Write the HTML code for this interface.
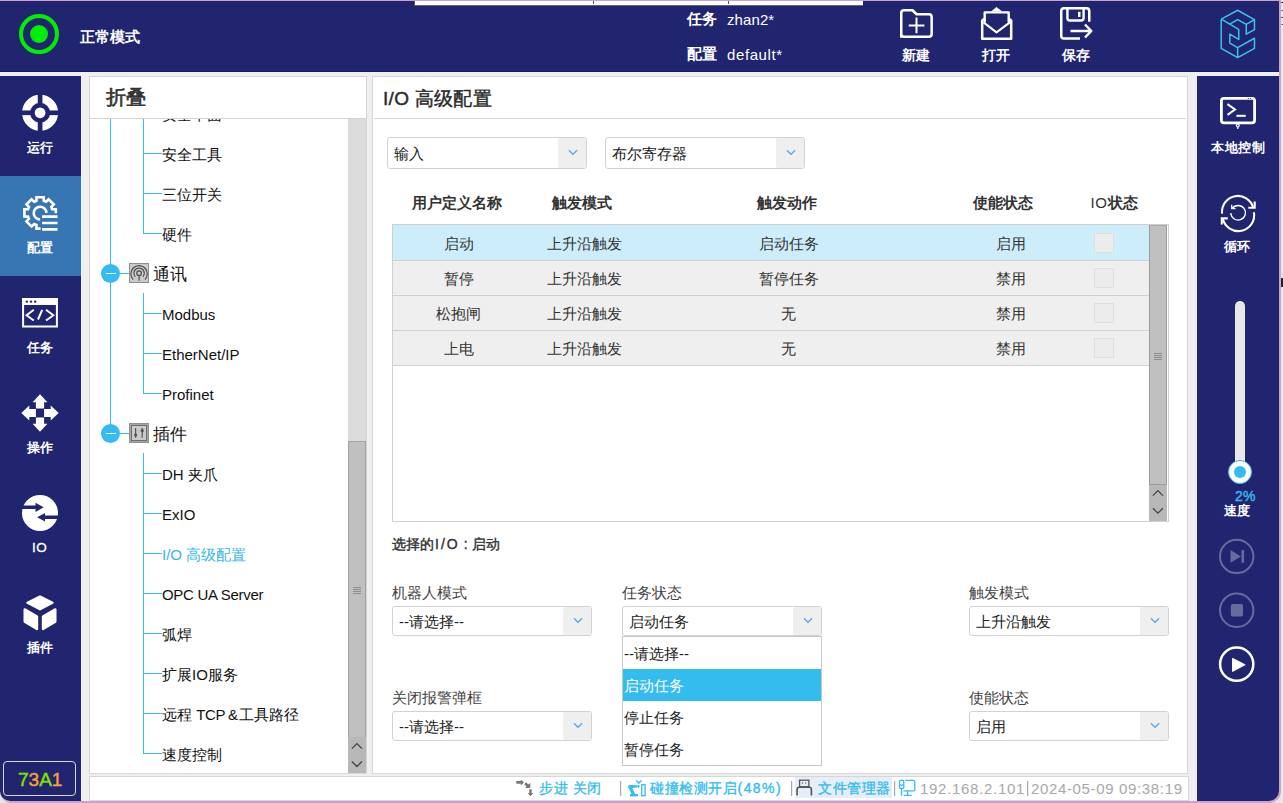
<!DOCTYPE html>
<html><head><meta charset="utf-8">
<style>
*{margin:0;padding:0;box-sizing:border-box}
html,body{width:1283px;height:803px;overflow:hidden;background:#e6e6e6}
body{position:relative;font-family:"Liberation Sans",sans-serif;color:#222}
.a{position:absolute}
.nav{background:#21256f}
.wt{color:#fff;font-weight:bold;white-space:nowrap}
.t{white-space:nowrap;position:absolute;line-height:1}
.panel{position:absolute;background:#fff;border:1px solid #d6d6d6}
.combo{position:absolute;background:#fff;border:1px solid #d2d2d2;border-radius:3px;overflow:hidden}
.combo .btn{position:absolute;top:0;right:0;bottom:0;width:28px;background:#efefef;border-radius:2px}
.combo .btn svg{position:absolute;left:9.5px;top:50%;margin-top:-4.3px}
.combo .tx{position:absolute;left:6px;top:2px;bottom:0;display:flex;align-items:center;font-size:15px;color:#222;white-space:nowrap}
.lbl{position:absolute;font-size:15px;color:#444;white-space:nowrap;line-height:1}
.tree-t{position:absolute;font-size:15px;color:#111;white-space:nowrap;line-height:20px}
.hl{position:absolute;background:#35bcee;height:1px}
.vl{position:absolute;background:#35bcee;width:1px}
</style></head>
<body>
<!-- window frame -->
<div class="a" style="left:0;top:0;width:1281px;height:803px;background:#c9a3c9;border-radius:0 0 12px 12px"></div>
<div class="a" style="left:0;top:1px;width:1279px;height:800px;background:#efefef;border-radius:0 0 10px 10px;overflow:hidden">
</div>

<!-- header -->
<div class="a nav" style="left:0;top:1px;width:1279px;height:71px"></div>
<div class="a" style="left:0;top:71px;width:1279px;height:1px;background:#161a60"></div>
<div class="a" style="left:414px;top:1px;width:449px;height:5px;background:#fff;border-left:1px solid #555;border-bottom:1px solid #666"></div>

<div class="a" style="left:593px;top:1px;width:1px;height:3px;background:#555"></div>
<div class="a" style="left:728px;top:1px;width:1px;height:3px;background:#555"></div>
<div class="a" style="left:1281px;top:0;width:2px;height:803px;background:#e8e8e8"></div>
<div class="a" style="left:1281px;top:2px;width:2px;height:1px;background:#333"></div>
<div class="a" style="left:1281px;top:10px;width:2px;height:1px;background:#777"></div>
<div class="a" style="left:1281px;top:17px;width:2px;height:1px;background:#555"></div>
<div class="a" style="left:1281px;top:24px;width:2px;height:1px;background:#777"></div>
<div class="a" style="left:1281px;top:278px;width:2px;height:9px;background:#222"></div>
<!-- status ring -->
<div class="a" style="left:19px;top:14px;width:40px;height:40px;border:4px solid #00ee00;border-radius:50%"></div>
<div class="a" style="left:30px;top:25px;width:18px;height:18px;background:#00ee00;border-radius:50%"></div>
<div class="t wt" style="left:80px;top:30px;font-size:14.5px">正常模式</div>

<div class="t wt" style="left:687px;top:11px;font-size:15px">任务</div>
<div class="t" style="left:727px;top:12px;font-size:15px;color:#fff;letter-spacing:0.1px">zhan2*</div>
<div class="t wt" style="left:687px;top:46px;font-size:15px">配置</div>
<div class="t" style="left:727px;top:47px;font-size:15px;color:#fff;letter-spacing:0.6px">default*</div>

<div class="t wt" style="left:902px;top:49px;font-size:13.5px">新建</div>
<div class="t wt" style="left:982px;top:49px;font-size:13.5px">打开</div>
<div class="t wt" style="left:1062px;top:49px;font-size:13.5px">保存</div>

<!-- left sidebar -->
<div class="a nav" style="left:0;top:76px;width:81px;height:725px;border-radius:0 0 0 10px"></div>
<div class="a" style="left:0;top:176px;width:81px;height:100px;background:#3776b3"></div>
<div class="t wt" style="left:27px;top:141px;font-size:13px">运行</div>
<div class="t wt" style="left:27px;top:241px;font-size:13px">配置</div>
<div class="t wt" style="left:27px;top:341px;font-size:13px">任务</div>
<div class="t wt" style="left:27px;top:441px;font-size:13px">操作</div>
<div class="t" style="left:32px;top:541px;font-size:13.5px;color:#fff;letter-spacing:0.5px;-webkit-text-stroke:0.3px #fff">IO</div>
<div class="t wt" style="left:27px;top:641px;font-size:13px">插件</div>
<div class="a" style="left:3px;top:761px;width:73px;height:35px;border:1.5px solid #d8d8d8;border-radius:4px"></div>
<div class="t" style="left:18px;top:770px;font-size:19px;-webkit-text-stroke:0.45px currentColor"><span style="color:#86e000;-webkit-text-stroke:0.45px #86e000">7</span><span style="color:#fa9e3c;-webkit-text-stroke:0.45px #fa9e3c">3</span><span style="color:#86e000;-webkit-text-stroke:0.45px #86e000">A</span><span style="color:#fa9e3c;-webkit-text-stroke:0.45px #fa9e3c">1</span></div>

<!-- right sidebar -->
<div class="a nav" style="left:1197px;top:76px;width:82px;height:725px;border-radius:0 0 10px 0"></div>
<div class="t wt" style="left:1211px;top:141px;font-size:13px;letter-spacing:0.6px">本地控制</div>
<div class="t wt" style="left:1224px;top:240px;font-size:13px">循环</div>
<div class="a" style="left:1235px;top:301px;width:10px;height:170px;background:#e8e8e8;border-radius:5px 5px 0 0"></div>
<div class="a" style="left:1228px;top:460px;width:24px;height:24px;background:#fff;border:1.5px solid #35bcee;border-radius:50%"></div>
<div class="a" style="left:1234px;top:466px;width:12px;height:12px;background:#35bcee;border-radius:50%"></div>
<div class="t" style="left:1235px;top:489px;font-size:14px;color:#35bcee;font-weight:normal;-webkit-text-stroke:0.4px #35bcee;letter-spacing:0.3px">2%</div>
<div class="t wt" style="left:1224px;top:504px;font-size:13px">速度</div>

<!-- tree panel -->
<div class="panel" style="left:89px;top:76px;width:278px;height:698px"></div>
<div class="t" style="left:106px;top:87px;font-size:20px;font-weight:normal;color:#333;-webkit-text-stroke:0.65px #333">折叠</div>
<div class="a" style="left:90px;top:118px;width:276px;height:1px;background:#d4d4d4"></div>

<div class="a" style="left:90px;top:119px;width:258px;height:654px;overflow:hidden;background:#fff">
<div class="vl" style="left:20px;top:0;height:314px;width:1.2px"></div>
<div class="vl" style="left:53.0px;top:-19.0px;height:134.0px"></div>
<div class="vl" style="left:53.0px;top:174.0px;height:101.0px"></div>
<div class="vl" style="left:53.0px;top:334.0px;height:301.0px"></div>
<div class="hl" style="left:53.0px;top:-6.0px;width:19.0px"></div>
<div class="tree-t" style="left:72px;top:-14px;color:#111">安全平面</div>
<div class="hl" style="left:53.0px;top:34.0px;width:19.0px"></div>
<div class="tree-t" style="left:72px;top:26px;color:#111">安全工具</div>
<div class="hl" style="left:53.0px;top:74.0px;width:19.0px"></div>
<div class="tree-t" style="left:72px;top:66px;color:#111">三位开关</div>
<div class="hl" style="left:53.0px;top:114.0px;width:19.0px"></div>
<div class="tree-t" style="left:72px;top:106px;color:#111">硬件</div>
<div class="hl" style="left:53.0px;top:194.0px;width:19.0px"></div>
<div class="tree-t" style="left:72px;top:186px;color:#111">Modbus</div>
<div class="hl" style="left:53.0px;top:234.0px;width:19.0px"></div>
<div class="tree-t" style="left:72px;top:226px;color:#111">EtherNet/IP</div>
<div class="hl" style="left:53.0px;top:274.0px;width:19.0px"></div>
<div class="tree-t" style="left:72px;top:266px;color:#111">Profinet</div>
<div class="hl" style="left:53.0px;top:354.0px;width:19.0px"></div>
<div class="tree-t" style="left:72px;top:346px;color:#111">DH 夹爪</div>
<div class="hl" style="left:53.0px;top:394.0px;width:19.0px"></div>
<div class="tree-t" style="left:72px;top:386px;color:#111">ExIO</div>
<div class="hl" style="left:53.0px;top:434.0px;width:19.0px"></div>
<div class="tree-t" style="left:72px;top:426px;color:#35b5ea">I/O 高级配置</div>
<div class="hl" style="left:53.0px;top:474.0px;width:19.0px"></div>
<div class="tree-t" style="left:72px;top:466px;color:#111"><span style="letter-spacing:-0.3px">OPC UA Server</span></div>
<div class="hl" style="left:53.0px;top:514.0px;width:19.0px"></div>
<div class="tree-t" style="left:72px;top:506px;color:#111">弧焊</div>
<div class="hl" style="left:53.0px;top:554.0px;width:19.0px"></div>
<div class="tree-t" style="left:72px;top:546px;color:#111">扩展IO服务</div>
<div class="hl" style="left:53.0px;top:594.0px;width:19.0px"></div>
<div class="tree-t" style="left:72px;top:586px;color:#111">远程 <span style="letter-spacing:-0.3px">TCP</span><span style="letter-spacing:-1.5px"> &amp; </span>工具路径</div>
<div class="hl" style="left:53.0px;top:634.0px;width:19.0px"></div>
<div class="tree-t" style="left:72px;top:626px;color:#111">速度控制</div>
<div class="a" style="left:11.1px;top:144.8px;width:19px;height:19px;border-radius:50%;background:#35bcee"></div>
<div class="a" style="left:15.6px;top:153.8px;width:10px;height:1.3px;background:#fff"></div>
<div class="hl" style="left:29.0px;top:154px;width:10px;height:1px"></div>
<div class="tree-t" style="left:63px;top:145px;font-size:16.5px">通讯</div>
<div class="a" style="left:11.1px;top:304.5px;width:19px;height:19px;border-radius:50%;background:#35bcee"></div>
<div class="a" style="left:15.6px;top:313.5px;width:10px;height:1.3px;background:#fff"></div>
<div class="hl" style="left:29.0px;top:314px;width:10px;height:1px"></div>
<div class="tree-t" style="left:63px;top:305px;font-size:16.5px">插件</div>
</div>
<svg class="a" style="left:0;top:0" width="1283" height="803" viewBox="0 0 1283 803">
 <rect x="129.5" y="263.5" width="19" height="19" fill="#cbcbcb" stroke="#8e8e8e" stroke-width="1"/>
 <g fill="none" stroke="#4a4a4a" stroke-width="1.15">
  <circle cx="139.1" cy="273.2" r="2.3"/>
  <path d="M139.1,275.6 V280.8"/>
  <path d="M135.3,276.8 A5.2,5.2 0 1 1 142.9,276.8"/>
  <path d="M133.2,279.5 A8.2,8.2 0 1 1 145,279.5"/>
 </g>
 <rect x="129.5" y="423.5" width="19" height="19" fill="#a6a6a6" stroke="#909090" stroke-width="1"/>
 <rect x="131.5" y="425.5" width="15" height="15" fill="#cacaca" stroke="#6e6e6e" stroke-width="1"/>
 <g fill="#555" stroke="#555">
  <path d="M135.6,428 V437.7 M142.2,428 V437.7" stroke-width="1.2"/>
  <circle cx="135.6" cy="435" r="1.6" stroke="none"/>
  <circle cx="142.2" cy="430.7" r="1.6" stroke="none"/>
 </g>
</svg>
<div class="a" style="left:348px;top:119px;width:18px;height:654px;background:#dcdcdc"></div>
<div class="a" style="left:348px;top:441px;width:18px;height:296px;background:#c0c0c0;border:1px solid #a2a2a2;border-bottom:none"></div>
<div class="a" style="left:353px;top:587px;width:8px;height:7px;background:repeating-linear-gradient(#8c8c8c 0 1px,transparent 1px 2px)"></div>
<div class="a" style="left:348px;top:737px;width:18px;height:36px;background:#b8b8b8"></div>
<svg class="a" style="left:348px;top:737px" width="18" height="36"><path d="M3.9,11.6 L8.9,6.6 L13.9,11.6 M3.9,24.5 L8.9,29.5 L13.9,24.5" fill="none" stroke="#444" stroke-width="1.3"/></svg>

<!-- main panel -->
<div class="panel" style="left:372px;top:76px;width:816px;height:698px"></div>
<div class="t" style="left:383px;top:89px;font-size:19px;font-weight:normal;color:#2a2a2a;-webkit-text-stroke:0.45px #2a2a2a;letter-spacing:0.3px">I/O 高级配置</div>
<div class="a" style="left:374px;top:118px;width:812px;height:1px;background:#d4d4d4"></div>

<div class="combo" style="left:387px;top:137px;width:200px;height:32px"><div class="tx">输入</div><div class="btn"><svg width="10" height="7" viewBox="0 0 10 7"><path d="M0.9,1.2 L5,5.2 L9.1,1.2" fill="none" stroke="#5ea6ea" stroke-width="1.35"/></svg></div></div>
<div class="combo" style="left:605px;top:137px;width:200px;height:32px"><div class="tx">布尔寄存器</div><div class="btn"><svg width="10" height="7" viewBox="0 0 10 7"><path d="M0.9,1.2 L5,5.2 L9.1,1.2" fill="none" stroke="#5ea6ea" stroke-width="1.35"/></svg></div></div>
<div class="t" style="left:357px;top:195px;width:200px;text-align:center;font-size:15px;font-weight:bold;color:#333">用户定义名称</div>
<div class="t" style="left:482px;top:195px;width:200px;text-align:center;font-size:15px;font-weight:bold;color:#333">触发模式</div>
<div class="t" style="left:687px;top:195px;width:200px;text-align:center;font-size:15px;font-weight:bold;color:#333">触发动作</div>
<div class="t" style="left:903px;top:195px;width:200px;text-align:center;font-size:15px;font-weight:bold;color:#333">使能状态</div>
<div class="t" style="left:1014px;top:195px;width:200px;text-align:center;font-size:15px;font-weight:bold;color:#333"><span style="font-weight:normal;letter-spacing:0.6px">IO</span>状态</div>
<div class="a" style="left:392px;top:224px;width:777px;height:298px;border:1px solid #cfcfcf;background:#fff"></div>
<div class="a" style="left:393px;top:225px;width:756px;height:35px;background:#cdedfb"></div><div class="a" style="left:393px;top:260px;width:756px;height:1px;background:#d0d0d0;z-index:1"></div>
<div class="t" style="left:358.8px;top:236px;width:200px;text-align:center;font-size:15px;color:#333">启动</div>
<div class="t" style="left:484.8px;top:236px;width:200px;text-align:center;font-size:15px;color:#333">上升沿触发</div>
<div class="t" style="left:688.6px;top:236px;width:200px;text-align:center;font-size:15px;color:#333">启动任务</div>
<div class="t" style="left:910.6px;top:236px;width:200px;text-align:center;font-size:15px;color:#333">启用</div>
<div class="a" style="left:1094px;top:233px;width:20px;height:20px;background:#ececec;border:1px solid #dedede"></div>
<div class="a" style="left:393px;top:260px;width:756px;height:35px;background:#efefef"></div><div class="a" style="left:393px;top:295px;width:756px;height:1px;background:#d0d0d0;z-index:1"></div>
<div class="t" style="left:358.8px;top:271px;width:200px;text-align:center;font-size:15px;color:#333">暂停</div>
<div class="t" style="left:484.8px;top:271px;width:200px;text-align:center;font-size:15px;color:#333">上升沿触发</div>
<div class="t" style="left:688.6px;top:271px;width:200px;text-align:center;font-size:15px;color:#333">暂停任务</div>
<div class="t" style="left:910.6px;top:271px;width:200px;text-align:center;font-size:15px;color:#333">禁用</div>
<div class="a" style="left:1094px;top:268px;width:20px;height:20px;background:#ececec;border:1px solid #dedede"></div>
<div class="a" style="left:393px;top:295px;width:756px;height:35px;background:#efefef"></div><div class="a" style="left:393px;top:330px;width:756px;height:1px;background:#d0d0d0;z-index:1"></div>
<div class="t" style="left:358.8px;top:306px;width:200px;text-align:center;font-size:15px;color:#333">松抱闸</div>
<div class="t" style="left:484.8px;top:306px;width:200px;text-align:center;font-size:15px;color:#333">上升沿触发</div>
<div class="t" style="left:688.6px;top:306px;width:200px;text-align:center;font-size:15px;color:#333">无</div>
<div class="t" style="left:910.6px;top:306px;width:200px;text-align:center;font-size:15px;color:#333">禁用</div>
<div class="a" style="left:1094px;top:303px;width:20px;height:20px;background:#ececec;border:1px solid #dedede"></div>
<div class="a" style="left:393px;top:330px;width:756px;height:35px;background:#efefef"></div><div class="a" style="left:393px;top:365px;width:756px;height:1px;background:#d0d0d0;z-index:1"></div>
<div class="t" style="left:358.8px;top:341px;width:200px;text-align:center;font-size:15px;color:#333">上电</div>
<div class="t" style="left:484.8px;top:341px;width:200px;text-align:center;font-size:15px;color:#333">上升沿触发</div>
<div class="t" style="left:688.6px;top:341px;width:200px;text-align:center;font-size:15px;color:#333">无</div>
<div class="t" style="left:910.6px;top:341px;width:200px;text-align:center;font-size:15px;color:#333">禁用</div>
<div class="a" style="left:1094px;top:338px;width:20px;height:20px;background:#ececec;border:1px solid #dedede"></div>
<div class="a" style="left:1149px;top:225px;width:18px;height:260px;background:#c0c0c0;border:1px solid #9c9c9c;border-top-color:#a8a8a8"></div>
<div class="a" style="left:1154px;top:353px;width:8px;height:7px;background:repeating-linear-gradient(#8c8c8c 0 1px,transparent 1px 2px)"></div>
<div class="a" style="left:1149px;top:485px;width:18px;height:36px;background:#b8b8b8"></div>
<svg class="a" style="left:1149px;top:485px" width="18" height="36"><path d="M3.9,10.6 L8.9,5.6 L13.9,10.6 M3.9,23.2 L8.9,28.2 L13.9,23.2" fill="none" stroke="#444" stroke-width="1.3"/></svg>
<div class="t" style="left:392px;top:537px;font-size:14px;font-weight:normal;color:#333;-webkit-text-stroke:0.4px #333">选择的<span style="letter-spacing:2px;margin-left:1px">I/O</span><span style="letter-spacing:0.2px"> : </span>启动</div>
<div class="lbl" style="left:392px;top:585px">机器人模式</div>
<div class="lbl" style="left:622px;top:585px">任务状态</div>
<div class="lbl" style="left:969px;top:585px">触发模式</div>
<div class="lbl" style="left:392px;top:690px">关闭报警弹框</div>
<div class="lbl" style="left:969px;top:690px">使能状态</div>
<div class="combo" style="left:392px;top:606px;width:200px;height:30px"><div class="tx">--请选择--</div><div class="btn"><svg width="10" height="7" viewBox="0 0 10 7"><path d="M0.9,1.2 L5,5.2 L9.1,1.2" fill="none" stroke="#5ea6ea" stroke-width="1.35"/></svg></div></div>
<div class="combo" style="left:622px;top:606px;width:200px;height:30px"><div class="tx">启动任务</div><div class="btn"><svg width="10" height="7" viewBox="0 0 10 7"><path d="M0.9,1.2 L5,5.2 L9.1,1.2" fill="none" stroke="#5ea6ea" stroke-width="1.35"/></svg></div></div>
<div class="combo" style="left:969px;top:606px;width:200px;height:30px"><div class="tx">上升沿触发</div><div class="btn"><svg width="10" height="7" viewBox="0 0 10 7"><path d="M0.9,1.2 L5,5.2 L9.1,1.2" fill="none" stroke="#5ea6ea" stroke-width="1.35"/></svg></div></div>
<div class="combo" style="left:392px;top:711px;width:200px;height:30px"><div class="tx">--请选择--</div><div class="btn"><svg width="10" height="7" viewBox="0 0 10 7"><path d="M0.9,1.2 L5,5.2 L9.1,1.2" fill="none" stroke="#5ea6ea" stroke-width="1.35"/></svg></div></div>
<div class="combo" style="left:969px;top:711px;width:200px;height:30px"><div class="tx">启用</div><div class="btn"><svg width="10" height="7" viewBox="0 0 10 7"><path d="M0.9,1.2 L5,5.2 L9.1,1.2" fill="none" stroke="#5ea6ea" stroke-width="1.35"/></svg></div></div>
<div class="a" style="left:622px;top:636px;width:200px;height:130px;background:#fff;border:1px solid #c8c8c8"></div>
<div class="a" style="left:623px;top:669px;width:198px;height:32px;background:#35bcee"></div>
<div class="t" style="left:624px;top:646px;font-size:15px;color:#222">--请选择--</div>
<div class="t" style="left:624px;top:678px;font-size:15px;color:#fff">启动任务</div>
<div class="t" style="left:624px;top:710px;font-size:15px;color:#222">停止任务</div>
<div class="t" style="left:624px;top:742px;font-size:15px;color:#222">暂停任务</div>
<!-- status bar -->
<div class="panel" style="left:89px;top:776px;width:1100px;height:25px"></div>


<svg class="a" style="left:0;top:0" width="1283" height="803" viewBox="0 0 1283 803">
<g fill="none" stroke="#fff" stroke-linecap="butt" stroke-linejoin="round">
 <!-- folder -->
 <path d="M901.25,36.65 V13 Q901.25,10.25 904,10.25 H912.5 L916.5,14.25 H929 Q931.65,14.25 931.65,17 V34 Q931.65,36.65 929,36.65 H904 Q901.25,36.65 901.25,34 Z" stroke-width="2.5"/>
 <path d="M908.7,25.4 H924.4 M916.5,17.5 V33.2" stroke-width="2"/>
 <!-- envelope -->
 <path d="M984.7,22.5 V12.4 H1008.7 V22.5" stroke-width="2.4"/>
 <path d="M984.7,18.6 L982.2,20.4 V38.7 H1011.2 V20.4 L1008.7,18.6" stroke-width="2.5"/>
 <path d="M983.5,22.4 L996.5,32.4 L1009.9,22.4" stroke-width="2"/>
 <!-- save -->
 <path d="M1080,38.45 H1064 Q1061.25,38.45 1061.25,35.7 V11 Q1061.25,8.25 1064,8.25 H1086.5 Q1089.25,8.25 1089.25,11 V21.8" stroke-width="2.5"/>
 <path d="M1067.4,8.5 V18 Q1067.4,20.5 1069.9,20.5 H1081 Q1083.6,20.5 1083.6,18 V8.5" stroke-width="2.4"/>
 <path d="M1070.5,31 H1090.5 M1085,24.5 L1091.3,31 L1085,37.5" stroke-width="2.5"/>
 <!-- logo -->
 <path d="M1221.21,19.20 L1237.65,10.23 L1254.47,19.57 L1254.47,29.66 L1246.25,34.15 L1246.25,24.43 L1237.65,19.57 L1229.81,24.06 M1221.21,19.20 L1238.77,29.29 L1238.77,39.38 L1229.81,34.15 L1229.81,43.12 L1237.65,47.60 L1254.47,38.26 L1254.47,48.35 L1237.65,57.69 L1221.21,48.35 L1221.21,19.20 M1246.25,24.43 L1254.47,19.57 M1237.65,47.60 L1237.65,57.69" stroke="#3ec0ef" stroke-width="1.5"/>
</g>
<g fill="#fff" stroke="none">
 <path d="M991,11.5 L996.5,7 L1002.2,11.5 Z"/>
 <rect x="1078" y="11.8" width="2.5" height="5.2"/>
</g>

<!-- left sidebar icons -->
<g>
 <circle cx="40.1" cy="112.8" r="14" fill="none" stroke="#fff" stroke-width="8"/>
 <rect x="37.75" y="93" width="4.7" height="40" fill="#21256f"/>
 <rect x="20" y="110.45" width="40" height="4.7" fill="#21256f"/>
 <circle cx="40.1" cy="112.8" r="5.4" fill="#fff"/>
</g>
<g fill="none" stroke="#fff">
 <path d="M40.6,228.59 H36.48 L36.42,224.95 L35.28,224.54 L34.18,224.03 L31.57,226.55 L26.45,221.43 L28.97,218.82 L28.46,217.72 L28.05,216.58 L24.41,216.52 L24.41,209.28 L28.05,209.22 L28.46,208.08 L28.97,206.98 L26.45,204.37 L31.57,199.25 L34.18,201.77 L35.28,201.26 L36.42,200.85 L36.48,197.21 L43.72,197.21 L43.78,200.85 L44.92,201.26 L46.02,201.77 L48.63,199.25 L53.75,204.37 L51.23,206.98 L51.74,208.08 L52.15,209.22 L55.79,209.28 L55.79,213.3" stroke-width="2.6" stroke-linejoin="miter"/>
 <path d="M40.1,219.5 A6.4,6.4 0 1 1 46.5,212.9" stroke-width="2.6"/>
 <path d="M42.1,216.6 H57.5 M42.1,223 H57.5 M42.1,229.3 H57.5" stroke-width="2.7"/>
</g>
<g>
 <rect x="23.1" y="299" width="33.8" height="27.5" fill="none" stroke="#fff" stroke-width="2"/>
 <rect x="22.1" y="298" width="35.8" height="7" fill="#fff"/>
 <circle cx="26.8" cy="301.6" r="1.2" fill="#21256f"/><circle cx="31" cy="301.6" r="1.2" fill="#21256f"/><circle cx="35.2" cy="301.6" r="1.2" fill="#21256f"/>
 <path d="M33.8,309.8 L26.6,315.2 L33.8,320.5 M42.2,309.8 L38,319.5 M46,309.8 L53.3,315.2 L46,320.5" fill="none" stroke="#fff" stroke-width="2"/>
</g>
<g fill="#fff">
 <path d="M40,394.3 L47.4,402.3 L44.1,402.3 L44.1,408.4 L35.9,408.4 L35.9,402.3 L32.6,402.3 Z"/>
 <path d="M40,431.7 L47.4,423.7 L44.1,423.7 L44.1,417.6 L35.9,417.6 L35.9,423.7 L32.6,423.7 Z"/>
 <path d="M21.3,413 L29.3,405.6 L29.3,408.9 L35.9,408.9 L35.9,417.1 L29.3,417.1 L29.3,420.4 Z"/>
 <path d="M58.7,413 L50.7,405.6 L50.7,408.9 L44.1,408.9 L44.1,417.1 L50.7,417.1 L50.7,420.4 Z"/>
</g>
<g>
 <circle cx="40" cy="513" r="18" fill="#fff"/>
 <path d="M21,505.4 H35.5 V502.8 L43.6,507.3 L35.5,512.1 V509.1 H21 Z" fill="#21256f"/>
 <path d="M59,515.4 H45 V513 L37.1,517.3 L45,521.6 V519.1 H59 Z" fill="#21256f"/>
</g>
<g fill="#fff" stroke="#fff" stroke-width="2.4" stroke-linejoin="round">
 <path d="M40,596.6 L52.5,602.8 L40,609.2 L27.5,602.8 Z"/>
 <path d="M24.7,609.4 L37,616.6 L37,629 L24.7,621.6 Z"/>
 <path d="M43,616.6 L55.3,609.4 L55.3,621.6 L43,629 Z"/>
</g>

<!-- right sidebar icons -->
<g fill="none" stroke="#fff">
 <rect x="1221.4" y="98.4" width="33.2" height="24.4" rx="2.5" stroke-width="2.8"/>
 <path d="M1227.5,104.1 L1235,109.5 L1227.5,114.9" stroke-width="2"/>
 <path d="M1236.4,115.8 H1245.7" stroke-width="2"/>
 <circle cx="1237.8" cy="125.6" r="1.4" stroke-width="1.2"/>
 <path d="M1237.8,127 V129" stroke-width="1.2"/>
</g>
<circle cx="1248.3" cy="98.5" r="0.6" fill="#21256f"/><circle cx="1250.6" cy="98.5" r="0.6" fill="#21256f"/>
<g fill="none" stroke="#fff" stroke-width="2.1">
 <path d="M1222.1,213.6 A15.9,15.9 0 0 1 1253.2,207.5"/>
 <path d="M1254.7,201.6 V207.7 H1248.3" stroke-linejoin="miter"/>
 <path d="M1253.9,212.2 A15.9,15.9 0 0 1 1222.8,218.8"/>
 <path d="M1221.8,224.4 V218.4 H1227.8" stroke-linejoin="miter"/>
 <path d="M1232.2,208.5 A7.3,7.3 0 1 1 1230.8,213" stroke-width="1.3"/>
 <path d="M1231.7,204.8 V208.7 H1235.5" stroke-width="1.3" stroke-linejoin="miter"/>
</g>
<g fill="none" stroke="rgba(255,255,255,0.32)" stroke-width="2">
 <circle cx="1236.7" cy="556.4" r="16.7"/>
 <circle cx="1236.7" cy="610.3" r="16.7"/>
</g>
<g fill="rgba(255,255,255,0.32)">
 <path d="M1230.5,550 L1241,556.4 L1230.5,562.8 Z"/>
 <rect x="1241.5" y="550" width="2.6" height="12.8"/>
 <rect x="1230.8" y="604" width="12.2" height="12.6" rx="2"/>
</g>
<circle cx="1236.7" cy="664.2" r="16.6" fill="none" stroke="#fff" stroke-width="2.5"/>
<path d="M1232.6,658.5 L1244.8,664.8 L1232.6,671.2 Z" fill="#fff" stroke="#fff" stroke-width="1.2" stroke-linejoin="round"/>
</svg>

<div class="a" style="left:795px;top:777px;width:97px;height:21px;background:#e6eef8"></div>
<svg class="a" style="left:0;top:0" width="1283" height="803" viewBox="0 0 1283 803">
 <g fill="#777" stroke="none">
  <path d="M516.3,781.1 H520.8 V779.5 L524,782.45 L520.8,785.4 V783.8 H516.3 Z"/>
  <path d="M524.2,784.2 L526.1,782.3 L528.4,784.6 L530.3,782.8 V788.1 H525 L526.5,786.5 Z"/>
  <path d="M529.3,789.2 H531.7 V793 H533.3 L530.5,796.3 L527.7,793 H529.3 Z"/>
 </g>
 <g fill="#aaa"><rect x="620" y="781" width="1.2" height="15"/><rect x="791" y="781" width="1.2" height="15"/><rect x="894" y="781" width="1.2" height="15"/><rect x="1027" y="781" width="1.2" height="15"/></g>
 <g fill="#35bcee" stroke="none">
  <rect x="630" y="794" width="8" height="2.4"/>
  <path d="M631.6,794.2 L635.2,794.2 L631.6,786.6 L628.4,787.2 Z"/>
  <circle cx="629.9" cy="786.6" r="1.7"/>
  <path d="M629.9,784.9 L637,785.2 L637,787.4 L629.9,788.3 Z"/>
  <path d="M636.6,786.3 L638.6,784.5 L639.8,786.3 L638.6,788.1 Z"/>
 </g>
 <g fill="none" stroke="#35bcee">
  <path d="M636,780.4 L638.9,782.8 L641.6,780.4" stroke-width="1.3"/>
  <path d="M638.9,782.8 V784" stroke-width="1"/>
  <rect x="641.7" y="784.7" width="3.4" height="11" stroke-width="1.3"/>
 </g>
 <g fill="none" stroke="#555">
  <rect x="799.6" y="780.2" width="9.3" height="6.6" stroke-width="1.3"/>
  <path d="M797.1,795.6 V789.5 Q797.1,787.3 799.3,787.3 H809.2 Q811.4,787.3 811.4,789.5 V795.6" stroke-width="1.6"/>
 </g>
 <g fill="#666"><rect x="802.2" y="782.2" width="0.9" height="1.6"/><rect x="805.3" y="782.2" width="0.9" height="1.6"/></g>
 <g fill="none" stroke="#35bcee" stroke-width="1.3">
  <rect x="899.5" y="780.4" width="4.3" height="8" rx="1"/>
  <path d="M900.8,784 V785.5 H902.4 V784" stroke-width="0.9"/>
  <path d="M901.5,788.4 V795.8"/>
  <path d="M905.3,780.3 H913.3 Q914.8,780.3 914.8,781.8 V789.4 Q914.8,790.9 913.3,790.9 H903.3"/>
  <path d="M907.6,790.9 V795.4 M903.8,795.4 H911.6"/>
 </g>
</svg>
<div class="t" style="left:539px;top:781px;font-size:14px;color:#35bcee;font-weight:normal;-webkit-text-stroke:0.35px #35bcee;letter-spacing:0.6px">步进 关闭</div>
<div class="t" style="left:650px;top:781px;font-size:14px;color:#35bcee;font-weight:normal;-webkit-text-stroke:0.35px #35bcee;letter-spacing:0.6px">碰撞检测开启<span style="letter-spacing:1.4px">(48%)</span></div>
<div class="t" style="left:818px;top:781px;font-size:14px;color:#35bcee;font-weight:normal;-webkit-text-stroke:0.35px #35bcee;letter-spacing:0.6px">文件管理器</div>
<div class="t" style="left:920px;top:781px;font-size:15px;color:#a8a8a8;letter-spacing:0.7px">192.168.2.101</div>
<div class="t" style="left:1031px;top:781px;font-size:15px;color:#a8a8a8;letter-spacing:0.65px">2024-05-09 09:38:19</div>

</body></html>
